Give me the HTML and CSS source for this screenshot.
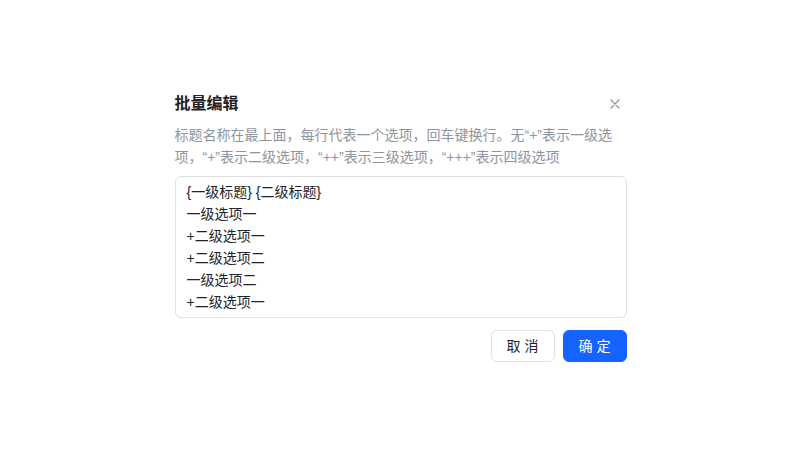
FILE: index.html
```html
<!DOCTYPE html>
<html lang="zh-CN">
<head>
<meta charset="utf-8">
<title>批量编辑</title>
<link rel="stylesheet" href="styles.css">
</head>
<body>
<div class="dialog">
  <div class="header">
    <h2 class="title">批量编辑</h2>
    <button class="close" aria-label="关闭">
      <svg width="10" height="10" viewBox="0 0 10 10"><path d="M1 1L9 9M9 1L1 9" stroke="currentColor" stroke-width="1.2" stroke-linecap="round"/></svg>
    </button>
  </div>
  <p class="desc">标题名称在最上面，每行代表一个选项，回车键换行。无“+”表示一级选项，“+”表示二级选项，“++”表示三级选项，“+++”表示四级选项</p>
  <textarea class="editor" spellcheck="false">{一级标题} {二级标题}
一级选项一
+二级选项一
+二级选项二
一级选项二
+二级选项一</textarea>
  <div class="footer">
    <button class="btn btn-default">取 消</button>
    <button class="btn btn-primary">确 定</button>
  </div>
</div>
</body>
</html>
```
FILE: styles.css
```css
html, body {
  margin: 0;
  padding: 0;
  height: 100%;
  background: #ffffff;
}
body {
  display: flex;
  align-items: center;
  justify-content: center;
  font-family: "Liberation Sans", "Noto Sans CJK SC", sans-serif;
  color: #1f2329;
}
.dialog {
  width: 452px;
  padding: 26px 24px 22px 25px;
  background: #fff;
  display: flex;
  flex-direction: column;
}
.header {
  display: flex;
  align-items: center;
  justify-content: space-between;
  height: 24px;
}
.title {
  margin: 0;
  font-size: 16px;
  line-height: 24px;
  font-weight: 700;
  color: #1f2329;
}
.close {
  border: 0;
  background: none;
  padding: 0;
  width: 16px;
  height: 16px;
  display: flex;
  align-items: center;
  justify-content: center;
  color: #8f959e;
  margin-right: 4px;
}
.desc {
  margin: 8px 6px 0 0;
  font-size: 14px;
  line-height: 22px;
  color: #8f959e;
}
.editor {
  margin-top: 8px;
  box-sizing: border-box;
  width: 100%;
  height: 142px;
  padding: 4px 11px;
  border: 1px solid #dee0e3;
  border-radius: 6px;
  font-family: "Liberation Sans", "Noto Sans CJK SC", sans-serif;
  font-size: 14px;
  line-height: 22px;
  color: #1f2329;
  resize: none;
  overflow: hidden;
  outline: none;
}
.footer {
  margin-top: 12px;
  display: flex;
  justify-content: flex-end;
  gap: 8px;
}
.btn {
  width: 64px;
  height: 32px;
  box-sizing: border-box;
  border-radius: 6px;
  font-family: "Liberation Sans", "Noto Sans CJK SC", sans-serif;
  font-size: 14px;
  line-height: 20px;
  padding: 0;
}
.btn-default {
  background: #fff;
  border: 1px solid #dee0e3;
  color: #1f2329;
}
.btn-primary {
  background: #1664ff;
  border: 1px solid #1664ff;
  color: #fff;
}
```
